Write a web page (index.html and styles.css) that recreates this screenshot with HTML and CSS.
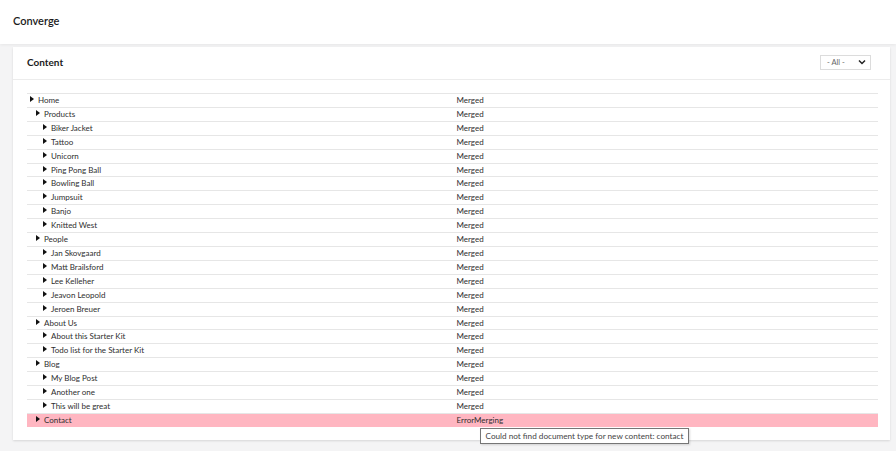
FILE: index.html
```html
<html>
<head>
    <title>Converge</title>
    <link rel="stylesheet" href="styles.css">
</head>
<body>
    <div class="topbar">
        <h1>Converge</h1>
    </div>

    <div class="panel">
        <div class="panel-head">
            <h2>Content</h2>
            <div class="filter">
                <span>- All -</span>
                <svg width="8" height="6" viewBox="0 0 8 6"><path d="M1 1.5 L4 4.5 L7 1.5" fill="none" stroke="#222" stroke-width="1.5"/></svg>
            </div>
        </div>
        <div class="panel-body">
            <table class="tree">
                <tr><td class="lvl0"><i class="arrow"></i>Home</td><td>Merged</td></tr>
                <tr><td class="lvl1"><i class="arrow"></i>Products</td><td>Merged</td></tr>
                <tr><td class="lvl2"><i class="arrow"></i>Biker Jacket</td><td>Merged</td></tr>
                <tr><td class="lvl2"><i class="arrow"></i>Tattoo</td><td>Merged</td></tr>
                <tr><td class="lvl2"><i class="arrow"></i>Unicorn</td><td>Merged</td></tr>
                <tr><td class="lvl2"><i class="arrow"></i>Ping Pong Ball</td><td>Merged</td></tr>
                <tr><td class="lvl2"><i class="arrow"></i>Bowling Ball</td><td>Merged</td></tr>
                <tr><td class="lvl2"><i class="arrow"></i>Jumpsuit</td><td>Merged</td></tr>
                <tr><td class="lvl2"><i class="arrow"></i>Banjo</td><td>Merged</td></tr>
                <tr><td class="lvl2"><i class="arrow"></i>Knitted West</td><td>Merged</td></tr>
                <tr><td class="lvl1"><i class="arrow"></i>People</td><td>Merged</td></tr>
                <tr><td class="lvl2"><i class="arrow"></i>Jan Skovgaard</td><td>Merged</td></tr>
                <tr><td class="lvl2"><i class="arrow"></i>Matt Brailsford</td><td>Merged</td></tr>
                <tr><td class="lvl2"><i class="arrow"></i>Lee Kelleher</td><td>Merged</td></tr>
                <tr><td class="lvl2"><i class="arrow"></i>Jeavon Leopold</td><td>Merged</td></tr>
                <tr><td class="lvl2"><i class="arrow"></i>Jeroen Breuer</td><td>Merged</td></tr>
                <tr><td class="lvl1"><i class="arrow"></i>About Us</td><td>Merged</td></tr>
                <tr><td class="lvl2"><i class="arrow"></i>About this Starter Kit</td><td>Merged</td></tr>
                <tr><td class="lvl2"><i class="arrow"></i>Todo list for the Starter Kit</td><td>Merged</td></tr>
                <tr><td class="lvl1"><i class="arrow"></i>Blog</td><td>Merged</td></tr>
                <tr><td class="lvl2"><i class="arrow"></i>My Blog Post</td><td>Merged</td></tr>
                <tr><td class="lvl2"><i class="arrow"></i>Another one</td><td>Merged</td></tr>
                <tr><td class="lvl2"><i class="arrow"></i>This will be great</td><td>Merged</td></tr>
                <tr class="error"><td class="lvl1"><i class="arrow"></i>Contact</td><td class="status">ErrorMerging<span class="tooltip">Could not find document type for new content: contact</span></td></tr>
            </table>
        </div>
    </div>
</body>
</html>
```

FILE: styles.css
```css
body {
    margin: 0;
    background-color: #f4f4f5;
    font-family: Lato, "Open Sans", sans-serif;
    color: #333;
}

.topbar {
    height: 44px;
    background-color: white;
    box-shadow: 0 1px 3px rgba(0, 0, 0, 0.06);
    display: flex;
    align-items: center;
    padding-left: 13px;
}

.topbar h1 {
    margin: 0;
    font-size: 11px;
    font-weight: 600;
    color: #1b1b1b;
    position: relative;
    top: -2px;
}

.panel {
    margin: 3px 6px 0 13px;
    height: 393px;
    background-color: white;
    box-shadow: 0 1px 2px rgba(0, 0, 0, 0.12);
}

.panel-head {
    height: 32px;
    border-bottom: 1px solid #ececec;
    display: flex;
    align-items: center;
    justify-content: space-between;
    padding: 0 19px 0 14px;
}

.panel-head h2 {
    margin: 0;
    font-size: 10px;
    font-weight: bold;
    color: #1b1b1b;
    position: relative;
    top: -1px;
}

.filter {
    width: 39px;
    height: 13px;
    border: 1px solid #dcdcdc;
    display: flex;
    align-items: center;
    justify-content: space-between;
    padding: 0 4px 0 6px;
    box-sizing: content-box;
    font-size: 7.5px;
    color: #666;
    position: relative;
    top: -1px;
}

.panel-body {
    padding: 13px 12px 0 14px;
}

.tree {
    width: 100%;
    border-collapse: collapse;
    font-size: 8px;
    color: #2e2e2e;
}

.tree tr {
    border-top: 1px solid #e6e6e6;
}

.tree td {
    width: 50%;
    height: 12.9px;
    padding: 0 0 0 4px;
    line-height: 12.9px;
    white-space: nowrap;
}

.tree td.lvl0 { padding-left: 3px; }
.tree td.lvl1 { padding-left: 9px; }
.tree td.lvl2 { padding-left: 16px; }

.arrow {
    display: inline-block;
    width: 0;
    height: 0;
    border-top: 3px solid transparent;
    border-bottom: 3px solid transparent;
    border-left: 4px solid #111;
    margin-right: 4px;
    vertical-align: 1px;
}

.tree tr.error {
    background-color: #ffb6c1;
}

.status {
    position: relative;
}

.tooltip {
    position: absolute;
    left: 27px;
    top: 14px;
    padding: 1px 5px;
    background-color: white;
    border: 1px solid #767676;
    box-shadow: 1px 1px 2px rgba(0, 0, 0, 0.15);
    font-size: 8.2px;
    line-height: 12px;
    color: #444;
    z-index: 2;
}
```
